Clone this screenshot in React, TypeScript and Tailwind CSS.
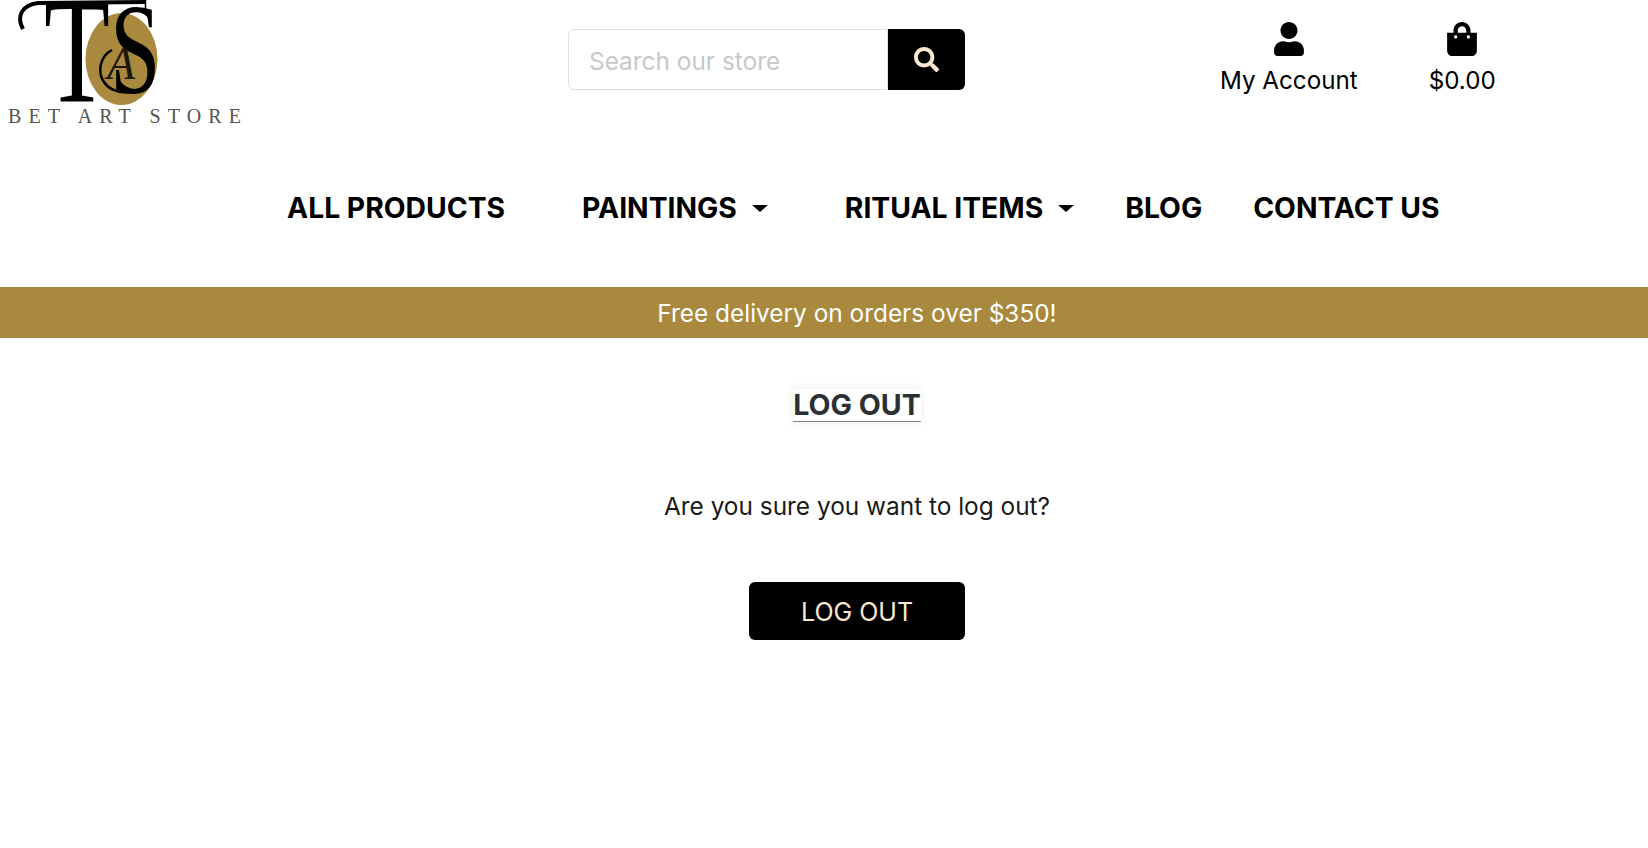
import { FaUser, FaShoppingBag, FaSearch } from 'react-icons/fa';

function Logo() {
  const serif = "'Liberation Serif', serif";
  return (
    <svg className="block overflow-visible" width="250" height="135" viewBox="0 0 250 135">
      <ellipse cx="121.5" cy="59" rx="36" ry="46" fill="#a8893d" />
      {/* T with its top swash */}
      <text transform="translate(77 101) scale(0.72 1)" textAnchor="middle" fontFamily={serif} fontSize="150" fill="#000">T</text>
      <path d="M23 29 C16 16 22 5 38 3 L146 2" fill="none" stroke="#000" strokeWidth="4" />
      <path d="M145.5 0 L145.5 13" fill="none" stroke="#000" strokeWidth="1.5" />
      {/* S and A monogram */}
      <text transform="translate(110 93) scale(0.7 1)" fontFamily={serif} fontSize="130" fill="#000">S</text>
      <text transform="translate(107 79)" fontFamily={serif} fontStyle="italic" fontSize="46" fill="#1c1608">A</text>
      <path d="M112 50 C100 56 97 72 104 82 C112 95 138 97 150 82" fill="none" stroke="#000" strokeWidth="2.5" />
      <text x="8" y="123" fontFamily={serif} fontSize="20" letterSpacing="7.1" fill="#555">BET ART STORE</text>
    </svg>
  );
}

function NavItem({ label, caret }: { label: string; caret?: boolean }) {
  return (
    <a className="flex items-center text-[28.3px] font-bold text-black">
      {label}
      {caret && <span className="ml-[15px] h-0 w-0 border-x-[8px] border-t-[7px] border-x-transparent border-t-black" />}
    </a>
  );
}

export default function App() {
  return (
    <div className="min-h-[848px] bg-white font-['Inter',sans-serif] text-black">
      <header className="h-[287px]">
        <div className="flex h-[135px] items-start">
          <div className="w-[568px]">
            <Logo />
          </div>
          <form className="mt-[29px] flex h-[61px] w-[397px]">
            <input
              placeholder="Search our store"
              className="h-full min-w-0 flex-1 rounded-l-md border border-[#dcdfe4] bg-white pt-[2px] pl-5 text-[24.4px] placeholder:text-[#c8c8c8] outline-none"
            />
            <button type="button" className="flex h-full w-[77px] items-center justify-center rounded-r-md bg-black text-[#fbe8cf]">
              <FaSearch size={25} />
            </button>
          </form>
          <div className="ml-[255px] mt-[22px] flex flex-col items-center text-[24.2px] leading-[36px]">
            <FaUser size={34} className="mb-[7px]" />
            My Account
          </div>
          <div className="ml-[71px] mt-[22px] flex flex-col items-center text-[24.2px] leading-[36px]">
            <FaShoppingBag size={34} className="mb-[7px]" />
            $0.00
          </div>
        </div>
        <nav className="mt-[50px] flex h-[47px] items-center pl-[287px]">
          <NavItem label="ALL PRODUCTS" />
          <div className="ml-[77px]"><NavItem label="PAINTINGS" caret /></div>
          <div className="ml-[77px]"><NavItem label="RITUAL ITEMS" caret /></div>
          <div className="ml-[51px]"><NavItem label="BLOG" /></div>
          <div className="ml-[51px]"><NavItem label="CONTACT US" /></div>
        </nav>
      </header>
      <div className="flex h-[51px] items-center justify-center bg-[#a8893d] pt-[2px] pl-[66px] text-[24.4px] text-white">
        Free delivery on orders over $350!
      </div>
      <main className="flex flex-col items-center pl-[66px]">
        <h1 className="mt-[51px] border-b border-[#8a8078] text-[28.6px] leading-[32px] font-bold text-[#2b3035] shadow-[0_0_8px_rgba(120,80,60,0.12)]">
          LOG OUT
        </h1>
        <p className="mt-[66px] text-[24.4px] leading-[36px] text-[#1a1a1a]">Are you sure you want to log out?</p>
        <button type="button" className="mt-[58px] h-[58px] w-[216px] rounded-md bg-black pt-[4px] text-[25px] text-[#fbe8cf]">
          LOG OUT
        </button>
      </main>
    </div>
  );
}
